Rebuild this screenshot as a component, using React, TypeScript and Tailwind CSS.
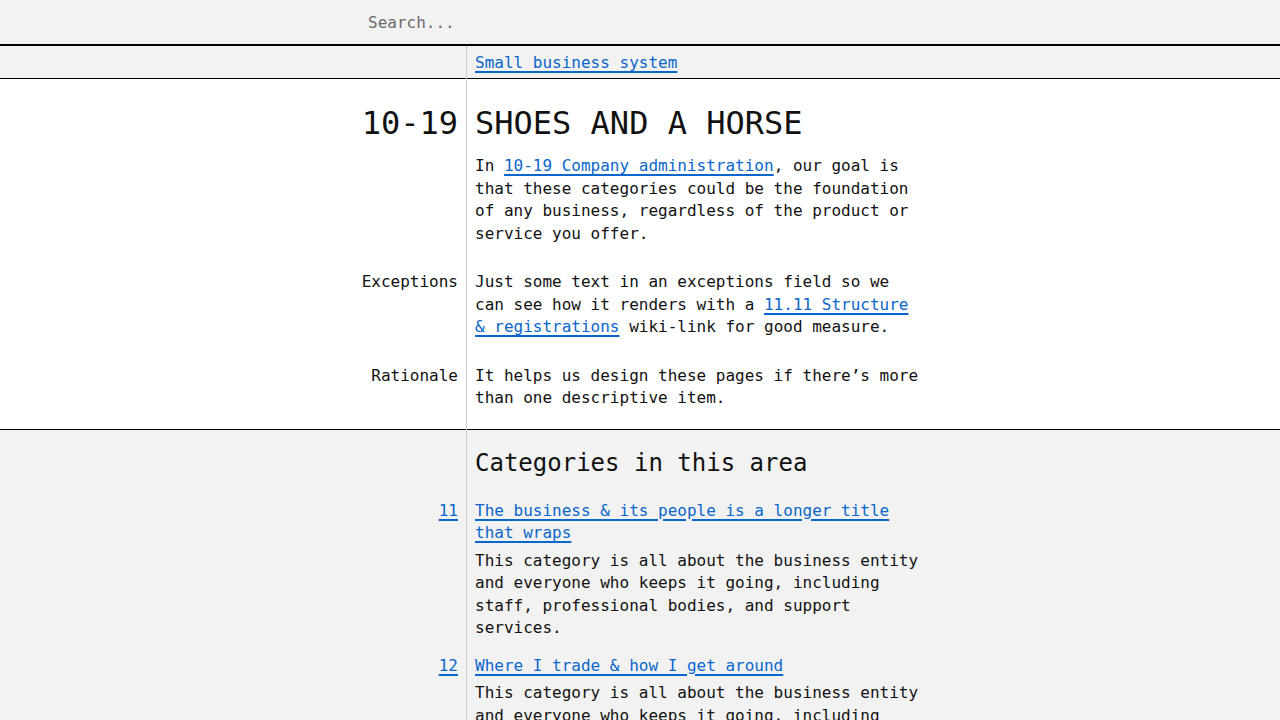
import React from "react";

const mono = { fontFamily: '"DejaVu Sans Mono", "Liberation Mono", monospace' };

function Link({ children }: { children: React.ReactNode }) {
  return (
    <a
      href="#"
      className="text-[#0a66cc] underline decoration-2 underline-offset-[3px]"
    >
      {children}
    </a>
  );
}

function Row({
  label,
  children,
  className = "",
}: {
  label?: React.ReactNode;
  children: React.ReactNode;
  className?: string;
}) {
  return (
    <div className={"flex " + className}>
      <div className="w-[466px] shrink-0 pr-2 text-right">{label}</div>
      <div className="flex-1 pl-[9px]">{children}</div>
    </div>
  );
}

const categories = [
  {
    id: "11",
    title: "The business & its people is a longer title that wraps",
    body: "This category is all about the business entity and everyone who keeps it going, including staff, professional bodies, and support services.",
  },
  {
    id: "12",
    title: "Where I trade & how I get around",
    body: "This category is all about the business entity and everyone who keeps it going, including staff, professional bodies, and support services.",
  },
];

export default function App() {
  return (
    <div
      className="min-h-screen bg-[#f2f2f2] text-[16px] leading-[22.5px] text-[#111]"
      style={mono}
    >
      {/* search */}
      <header className="h-[46px] border-b-2 border-black bg-[#f2f2f2]">
        <div className="pl-[360px]">
          <input
            placeholder="Search..."
            className="h-[44px] w-[560px] bg-transparent px-2 text-[16px] text-[#111] outline-none placeholder:text-[#6b6b6b]"
            style={mono}
          />
        </div>
      </header>

      <div className="relative">
        <div className="absolute bottom-0 left-[466px] top-0 w-px bg-[#cccccc]" />

        {/* breadcrumb */}
        <Row className="h-[33px] items-center border-b border-black pt-[3px]">
          <Link>Small business system</Link>
        </Row>

        {/* area */}
        <section className="bg-white pb-[19px] pt-[25px]">
          <Row
            className="items-baseline"
            label={<span className="text-[32px] leading-[38px]">10-19</span>}
          >
            <h1 className="text-[32px] leading-[38px]">SHOES AND A HORSE</h1>
          </Row>
          <Row className="mt-[13px]">
            <p className="max-w-[448px]">
              In <Link>10-19 Company administration</Link>, our goal is that
              these categories could be the foundation of any business,
              regardless of the product or service you offer.
            </p>
          </Row>
          <Row className="mt-[26px]" label="Exceptions">
            <p className="max-w-[448px]">
              Just some text in an exceptions field so we can see how it
              renders with a <Link>11.11 Structure &amp; registrations</Link>{" "}
              wiki-link for good measure.
            </p>
          </Row>
          <Row className="mt-[26px]" label="Rationale">
            <p className="max-w-[448px]">
              It helps us design these pages if there’s more than one
              descriptive item.
            </p>
          </Row>
        </section>

        {/* categories */}
        <section className="border-t border-black pb-10 pt-[19px]">
          <Row>
            <h2 className="text-[24px] leading-[29px]">Categories in this area</h2>
          </Row>
          {categories.map((c, i) => (
            <div key={c.id} className={i === 0 ? "mt-[22px]" : "mt-[15px]"}>
              <Row label={<Link>{c.id}</Link>}>
                <div className="max-w-[448px]">
                  <Link>{c.title}</Link>
                </div>
              </Row>
              <Row className="mt-[5px]">
                <p className="max-w-[448px]">{c.body}</p>
              </Row>
            </div>
          ))}
        </section>
      </div>
    </div>
  );
}
